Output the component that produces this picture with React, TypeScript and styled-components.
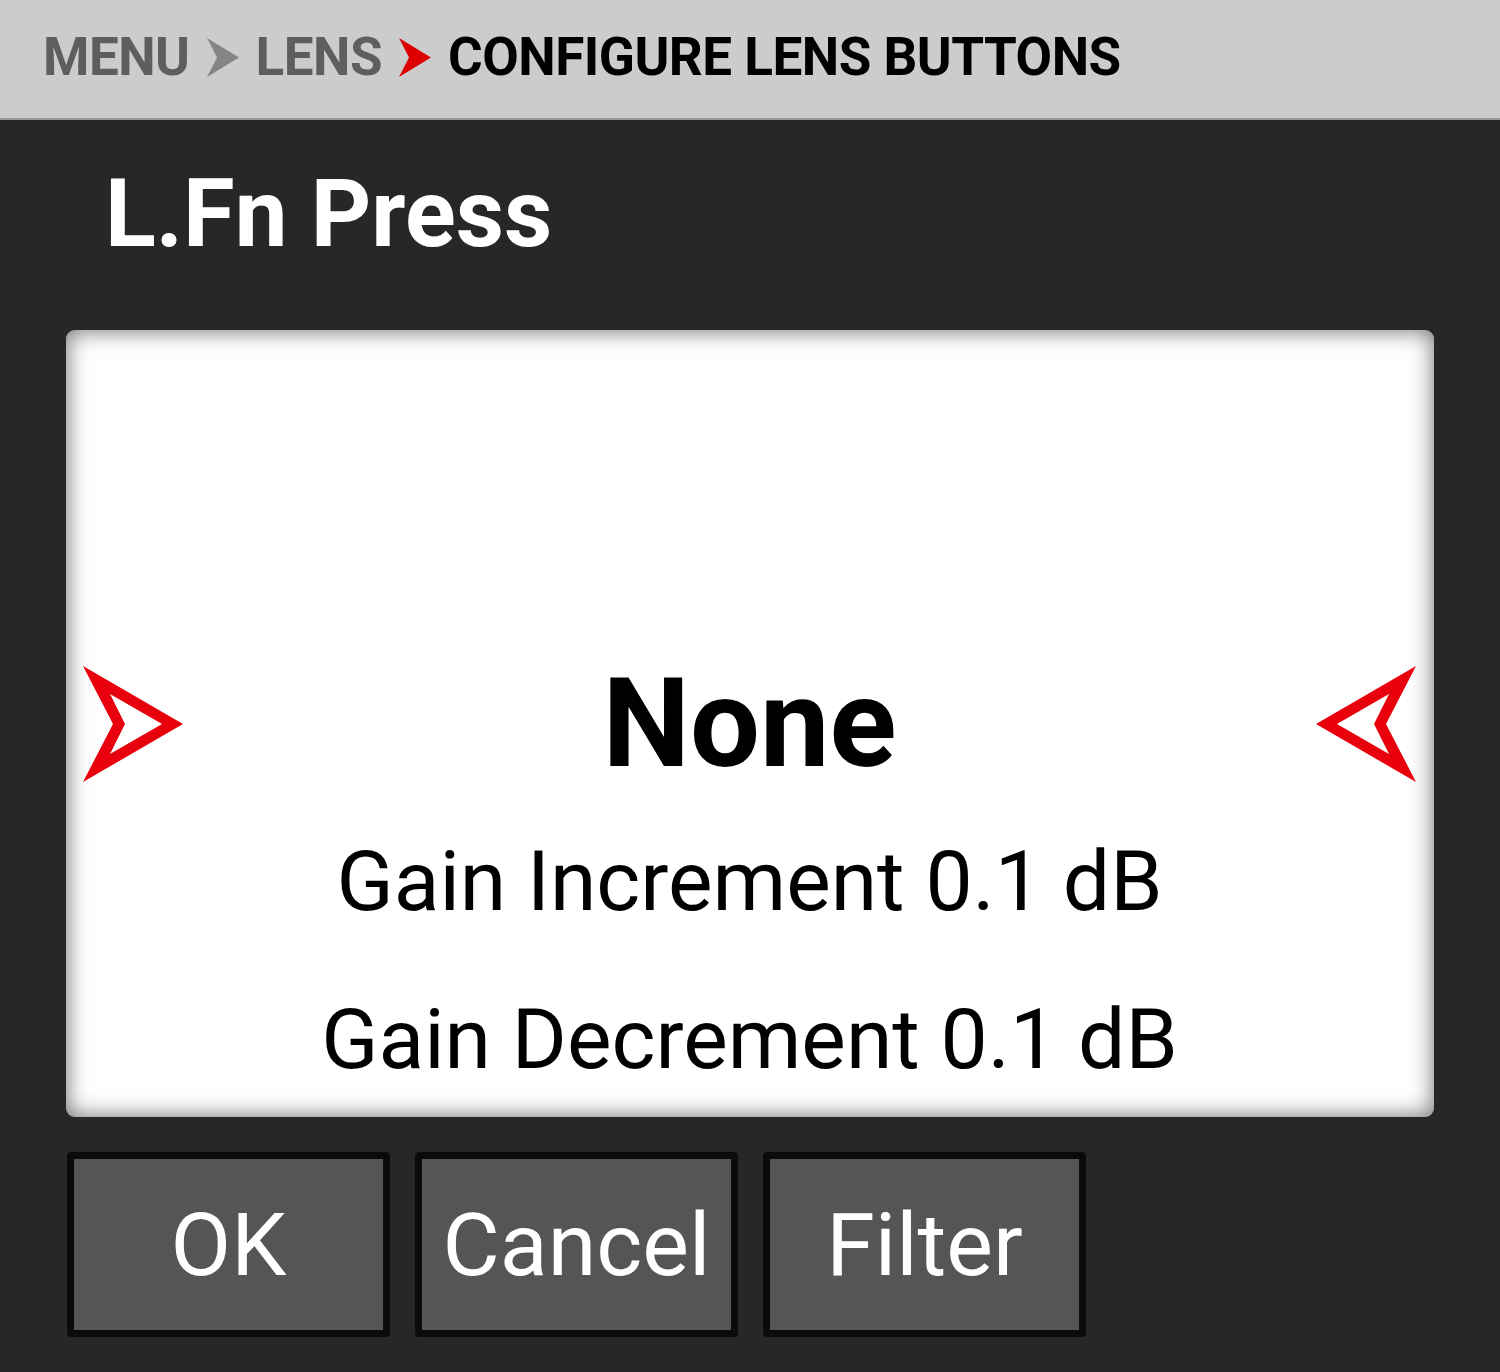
import styled, { createGlobalStyle } from "styled-components";
import { FunctionComponent } from "react";

const Global = createGlobalStyle`
  html, body {
    margin: 0;
    padding: 0;
    background: #272727;
  }
  body {
    font-family: Roboto, "Liberation Sans", sans-serif;
  }
`;

const Screen = styled.div`
  width: 1500px;
  height: 1372px;
  display: flex;
  flex-direction: column;
  background: #272727;
  overflow: hidden;
`;

const Header = styled.div`
  flex: 0 0 120px;
  border-bottom: 2px solid #9a9a9a;
  background: #cccccc;
  display: flex;
  align-items: center;
  gap: 17px;
  padding: 0 0 4px 43px;
  box-sizing: border-box;
`;

const Crumb = styled.span<{ current?: boolean }>`
  font-size: 53px;
  line-height: 1;
  font-weight: 700;
  letter-spacing: -0.5px;
  color: ${(p) => (p.current ? "#000000" : "#5e5e5e")};
`;

const Body = styled.div`
  flex: 1;
  display: flex;
  flex-direction: column;
  padding: 0 66px;
`;

const Title = styled.h1`
  margin: 47px 0 69px 39px;
  font-size: 94px;
  line-height: 1;
  font-weight: 700;
  color: #ffffff;
`;

const Picker = styled.div`
  flex: 0 0 787px;
  background: #ffffff;
  border-radius: 9px;
  box-shadow: inset 0 0 22px 1px rgba(0, 0, 0, 0.55);
  overflow: hidden;
  display: flex;
  flex-direction: column;
  padding-top: 315px;
  box-sizing: border-box;
`;

const Row = styled.div<{ selected?: boolean }>`
  flex: 0 0 158px;
  display: flex;
  align-items: center;
  justify-content: ${(p) => (p.selected ? "space-between" : "center")};
  padding: 0 18px 0 17px;
`;

const Option = styled.span<{ selected?: boolean }>`
  font-size: ${(p) => (p.selected ? "124px" : "84px")};
  font-weight: ${(p) => (p.selected ? 700 : 400)};
  line-height: 1;
  color: #000000;
`;

const Buttons = styled.div`
  display: flex;
  gap: 25px;
  margin-top: 35px;
  padding-left: 1px;
`;

const Button = styled.button`
  width: 323px;
  height: 185px;
  box-sizing: border-box;
  border: 7px solid #0b0b0b;
  border-radius: 4px;
  background: #555555;
  color: #ffffff;
  font-family: Roboto, "Liberation Sans", sans-serif;
  font-size: 88px;
  line-height: 1;
  padding: 0;
`;

const Chevron: FunctionComponent<{ color: string }> = ({ color }) => (
  <svg width="32" height="39" viewBox="0 0 32 39">
    <path d="M0 0 L32 19.5 L0 39 L10 19.5 Z" fill={color} />
  </svg>
);

const Pointer: FunctionComponent<{ flip?: boolean }> = ({ flip }) => (
  <svg width="100" height="116" viewBox="0 0 100 116" style={flip ? { transform: "scaleX(-1)" } : undefined}>
    <path
      d="M0 0 L100 58 L0 116 L30 58 Z M27 28 L42 58 L27 88 L79 58 Z"
      fill="#e8000d"
      fillRule="evenodd"
    />
  </svg>
);

const options = ["None", "Gain Increment 0.1 dB", "Gain Decrement 0.1 dB"];

export default function App() {
  return (
    <Screen>
      <Global />
      <Header>
        <Crumb>MENU</Crumb>
        <Chevron color="#858585" />
        <Crumb>LENS</Crumb>
        <Chevron color="#dd0000" />
        <Crumb current>CONFIGURE LENS BUTTONS</Crumb>
      </Header>
      <Body>
        <Title>L.Fn Press</Title>
        <Picker>
          {options.map((o, i) =>
            i === 0 ? (
              <Row key={o} selected>
                <Pointer />
                <Option selected>{o}</Option>
                <Pointer flip />
              </Row>
            ) : (
              <Row key={o}>
                <Option>{o}</Option>
              </Row>
            )
          )}
        </Picker>
        <Buttons>
          <Button>OK</Button>
          <Button>Cancel</Button>
          <Button>Filter</Button>
        </Buttons>
      </Body>
    </Screen>
  );
}
